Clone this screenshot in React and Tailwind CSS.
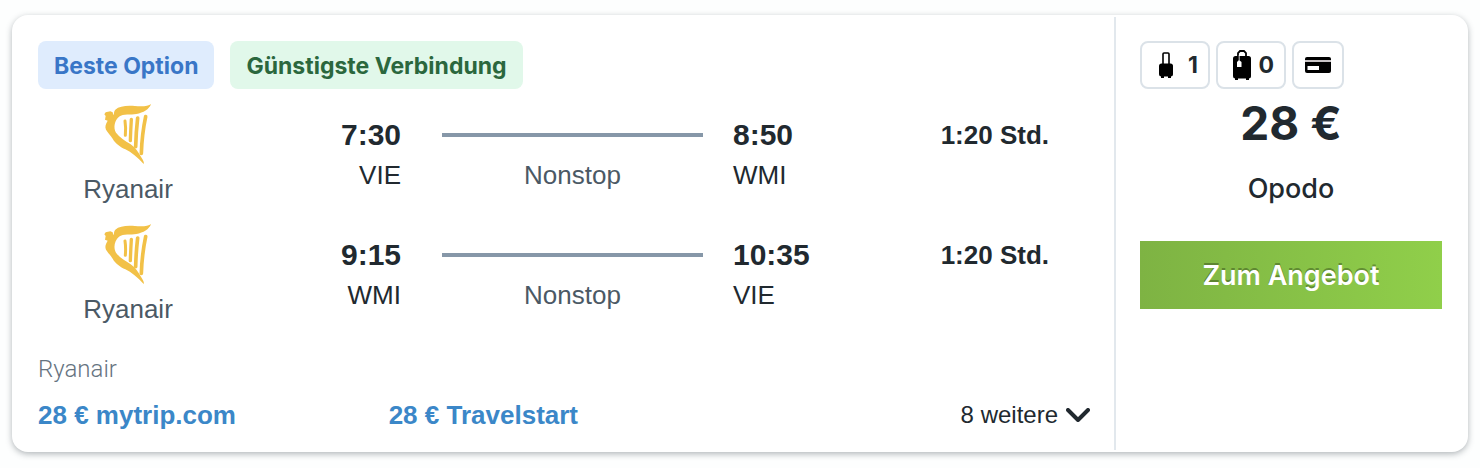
import React from 'react';

const flights = [
    { airline: 'Ryanair', departure: '7:30', from: 'VIE', stops: 'Nonstop', arrival: '8:50', to: 'WMI', duration: '1:20 Std.' },
    { airline: 'Ryanair', departure: '9:15', from: 'WMI', stops: 'Nonstop', arrival: '10:35', to: 'VIE', duration: '1:20 Std.' },
];

const otherOffers = [
    { price: '28 €', provider: 'mytrip.com' },
    { price: '28 €', provider: 'Travelstart' },
];

function HarpLogo() {
    return (
        <svg viewBox="102 27 144 186" className="h-[62px] w-12" fill="#f2c147" aria-hidden="true">
            <path d="M243 30C236 37 215 38 195 36C170 34 148 36 136 47C131 52 133 58 130 64L128 55L121 52L107 55L103 61L107 66L105 77L113 80C107 90 104 98 108 107C115 118 122 124 128 134C137 150 151 158 166 166C184 175 203 190 221 210C223 206 220 200 215 192C205 174 196 160 181 150C166 141 148 130 138 116C129 101 134 78 147 68C160 59 182 63 199 60C220 56 238 46 243 30Z" />
            <g fill="none" stroke="#f2c147" strokeLinecap="round">
                <path d="M165 81Q168 100 166 124" strokeWidth="9" />
                <path d="M184 76Q182 110 181 140" strokeWidth="10" />
                <path d="M203 72Q198 115 197 158" strokeWidth="11" />
                <path d="M227 68Q216 120 214 178" strokeWidth="11" />
            </g>
        </svg>
    );
}

function TrolleyIcon() {
    return (
        <svg viewBox="0 0 14 26" className="h-[26px] w-3.5" aria-hidden="true">
            <path d="M4 12V2Q4 1 5 1H9Q10 1 10 2V12" fill="none" stroke="#000" strokeWidth="1.6" />
            <rect x="0" y="11.5" width="14" height="13" rx="2.5" />
            <path d="M2 24h3v2H2zM9 24h3v2H9z" />
        </svg>
    );
}

function SuitcaseIcon() {
    return (
        <svg viewBox="0 0 18 30" className="h-[30px] w-[18px]" aria-hidden="true">
            <path d="M5 6V3L7 1H11L13 3V6" fill="none" stroke="#000" strokeWidth="1.8" />
            <rect x="0" y="6" width="18" height="22.5" rx="2.5" />
            <path d="M2 28h3v2H2zM13 28h3v2h-3z" />
            <path d="M4 12L6 10L8.500 12V17H4Z" fill="#fff" />
            <path d="M6.200 10.500V5" fill="none" stroke="#fff" strokeWidth="0.8" />
        </svg>
    );
}

function CardIcon() {
    return (
        <svg viewBox="0 0 26 16" className="h-4 w-[26px]" aria-hidden="true">
            <path d="M0 3V2Q0 0 2 0H24Q26 0 26 2V3Z" />
            <path d="M0 3H26V5H0Z" fill="#c9c4c6" />
            <path d="M0 5H26V14Q26 16 24 16H2Q0 16 0 14Z" />
            <rect x="2.500" y="9" width="11.500" height="4" fill="#fff" />
        </svg>
    );
}

function FlightRow({ flight }) {
    return (
        <div className="grid h-[120px] grid-cols-[180fr_224fr_261fr_190fr_197fr]">
            <div className="flex flex-col items-center pt-3.5 text-[#4b5965]">
                <HarpLogo />
                <span className="mt-2 leading-8">{flight.airline}</span>
            </div>
            <div className="pt-[26px] pr-[41px] text-right">
                <div className="text-[30px] leading-10 font-bold">{flight.departure}</div>
                <div className="leading-10">{flight.from}</div>
            </div>
            <div className="pt-[26px] text-center text-[#4b5965]">
                <div className="flex h-10 items-center">
                    <div className="h-1 w-full bg-[#8697a8]" />
                </div>
                <div className="leading-10">{flight.stops}</div>
            </div>
            <div className="pt-[26px] pl-[30px]">
                <div className="text-[30px] leading-10 font-bold">{flight.arrival}</div>
                <div className="leading-10">{flight.to}</div>
            </div>
            <div className="pt-[26px] pr-[41px] text-right leading-10 font-bold">{flight.duration}</div>
        </div>
    );
}

function App() {
    return (
        <div className="bg-[#fdfefe] px-3 pt-[15px] pb-4 font-['Liberation_Sans',Arial,sans-serif] text-[26px] text-[#21292f]">
            <article className="flex rounded-2xl bg-white py-0.5 shadow-[0_2px_6px_rgba(37,50,56,0.35)]">
                {/* Verbindung */}
                <div className="flex-1 border-r-2 border-[#e2e8ed] pt-6 pr-6 pb-[15px] pl-[26px]">
                    <div className="flex gap-4 font-[Inter,sans-serif] text-[23px] leading-8 font-bold">
                        <span className="rounded-lg bg-[#dfecfd] px-4 pt-[9px] pb-[7px] text-[#3976c7]">Beste Option</span>
                        <span className="rounded-lg bg-[#e1f8ea] px-4 pt-[9px] pb-[7px] text-[#2b673d]">Günstigste Verbindung</span>
                    </div>

                    {flights.map((flight) => (
                        <FlightRow key={flight.departure} flight={flight} />
                    ))}

                    {/* Weitere Anbieter */}
                    <div className="mt-6 font-[Roboto,sans-serif] text-2xl leading-8 font-light text-[#66737f]">Ryanair</div>
                    <div className="mt-2.5 flex items-center leading-10">
                        {otherOffers.map((offer) => (
                            <div key={offer.provider} className="w-1/3">
                                <a href="#" className="font-bold text-[#3b87c8]">
                                    {offer.price} {offer.provider}
                                </a>
                            </div>
                        ))}
                        <button type="button" className="ml-auto flex items-center gap-2 text-2xl leading-10">
                            8 weitere
                            <svg viewBox="0 0 24 14" className="h-3.5 w-6" fill="none" stroke="#21292f" strokeWidth="4" strokeLinecap="round" strokeLinejoin="round" aria-hidden="true">
                                <path d="M2 2L12 12L22 2" />
                            </svg>
                        </button>
                    </div>
                </div>

                {/* Preis und Angebot */}
                <div className="w-[352px] pt-6 pr-[26px] pl-6 font-[Inter,sans-serif]">
                    <div className="flex gap-1.5 text-[23px] font-bold">
                        <span className="flex h-12 w-[70px] items-center justify-between rounded-lg border-2 border-[#dbe2e8] pr-2.5 pl-[17px]">
                            <TrolleyIcon />1
                        </span>
                        <span className="flex h-12 w-[70px] items-center justify-between rounded-lg border-2 border-[#dbe2e8] pr-2.5 pl-[15px]">
                            <SuitcaseIcon />0
                        </span>
                        <span className="flex h-12 w-[52px] items-center justify-center rounded-lg border-2 border-[#dbe2e8]">
                            <CardIcon />
                        </span>
                    </div>
                    <div className="mt-1 text-center text-[46px] leading-[60px] font-bold">28 €</div>
                    <div className="mt-4 text-center text-[27px] leading-10 font-medium">Opodo</div>
                    <button type="button" className="mt-8 h-[68px] w-full bg-linear-to-r from-[#7eb343] to-[#90cf4a] pt-0.5 text-[27px] font-semibold text-white [text-shadow:0_-2px_0_rgba(0,0,0,0.3)]">
                        Zum Angebot
                    </button>
                </div>
            </article>
        </div>
    );
}

export default App;
